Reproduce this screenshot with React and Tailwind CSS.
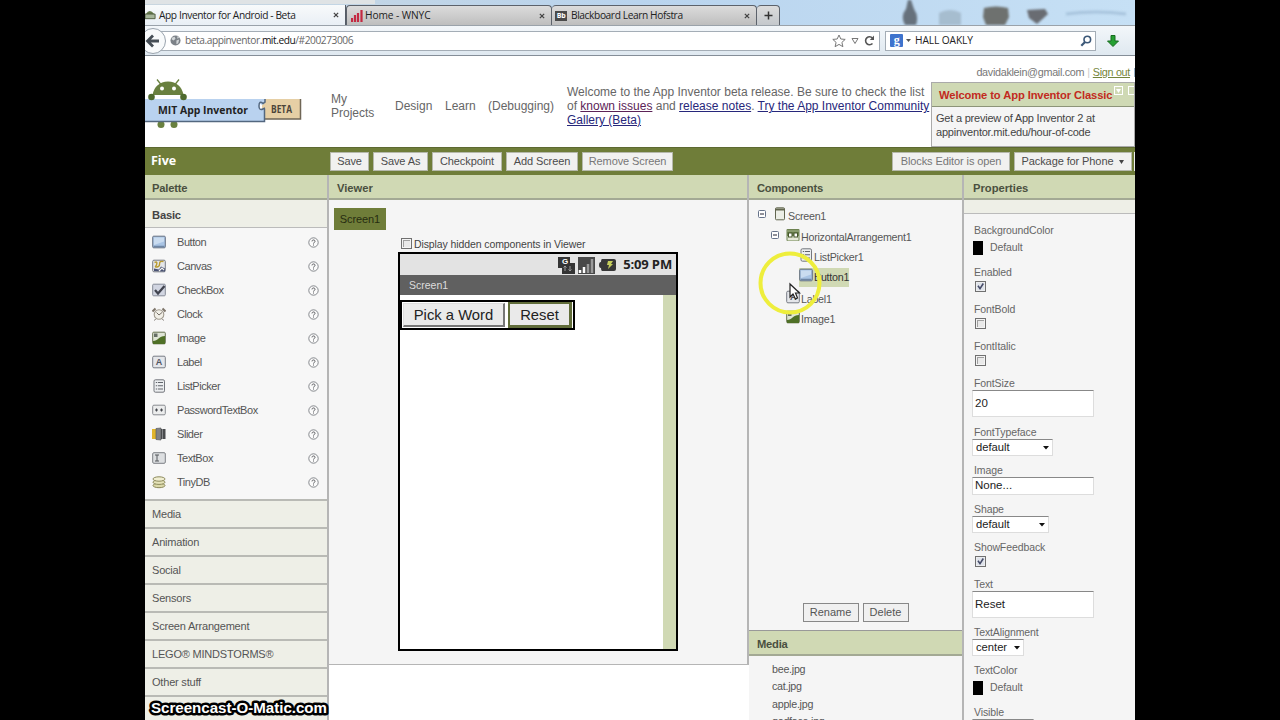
const PALETTE = ["Button", "Canvas", "CheckBox", "Clock", "Image", "Label", "ListPicker", "PasswordTextBox", "Slider", "TextBox", "TinyDB"];
const SECTIONS = ["Media", "Animation", "Social", "Sensors", "Screen Arrangement", "LEGO® MINDSTORMS®", "Other stuff"];
const TREE = [
  { name: "Screen1", icon: "Screen", pad: "pl-[24px]", toggle: "left-[9px]", gap: "gap-px" },
  { name: "HorizontalArrangement1", icon: "Arrangement", pad: "pl-[37px]", toggle: "left-[22px]", gap: "gap-px" },
  { name: "ListPicker1", icon: "ListPicker", pad: "pl-[50px]", gap: "gap-px" },
  { name: "Button1", icon: "Button", pad: "pl-[50px]", gap: "gap-px", selected: true },
  { name: "Label1", icon: "Label", pad: "pl-[37px]", gap: "gap-px" },
  { name: "Image1", icon: "Image", pad: "pl-[37px]", gap: "gap-px" },
];
const PROPS = [
  { label: "BackgroundColor", kind: "color", h: "h-[42px]" },
  { label: "Enabled", kind: "check", checked: true, h: "h-[37px]" },
  { label: "FontBold", kind: "check", h: "h-[37px]" },
  { label: "FontItalic", kind: "check", h: "h-[37px]" },
  { label: "FontSize", kind: "input", value: "20", box: "h-[27px]", h: "h-[49px]" },
  { label: "FontTypeface", kind: "select", value: "default", w: "w-[81px]", h: "h-[38px]" },
  { label: "Image", kind: "input", value: "None...", box: "h-[18px]", h: "h-[39px]" },
  { label: "Shape", kind: "select", value: "default", w: "w-[77px]", h: "h-[38px]" },
  { label: "ShowFeedback", kind: "check", checked: true, h: "h-[37px]" },
  { label: "Text", kind: "input", value: "Reset", box: "h-[27px]", h: "h-[48px]" },
  { label: "TextAlignment", kind: "select", value: "center", w: "w-[52px]", h: "h-[38px]" },
  { label: "TextColor", kind: "color", h: "h-[42px]" },
  { label: "Visible", kind: "select", value: "", w: "w-[62px]", h: "h-[38px]" },
];

function Icon({ name }) {
  const frame = <rect x=".7" y="1.2" width="12.6" height="11.6" rx="1.2" fill="#e4e6ea" stroke="#777b84" />;
  const art = {
    Screen: <><rect x="2.5" y=".8" width="9" height="12" rx="1" fill="#eceee6" stroke="#62664f" /><path d="M2.5 1.5h9v2h-9z" fill="#62664f" /></>,
    Arrangement: <><rect x=".5" y="1" width="13" height="12" rx="1" fill="#6d8250" /><path d="M1.500 8h11v4.500h-11z" fill="#e6ead8" /><rect x="2.5" y="5" width="3.5" height="4" fill="#fff" stroke="#45572b" /><rect x="8" y="5" width="3.5" height="4" fill="#fff" stroke="#45572b" /><path d="M1 3h12" stroke="#a5b58a" /></>,
    Button: <><rect x=".7" y="1.2" width="12.6" height="11.6" rx="1" fill="#a9c4e4" stroke="#656f80" /><path d="M2 2.5h10v4L2 10z" fill="#cadcf0" /><path d="M1.5 11.5h11" stroke="#6e86a5" strokeWidth="1.5" /></>,
    Canvas: <>{frame}<path d="M2 12V9.500l5 1 2-3 4 2v3z" fill="#4a5375" /><path d="M2.500 3.500c4-2 2 3 1 4s4 1 4-2 1-3.500 4-3" fill="none" stroke="#b99b2f" strokeWidth="1.4" /><path d="M7 12l3-3 2 2" fill="none" stroke="#f4f4ee" strokeWidth="1.2" /></>,
    CheckBox: <><rect x=".7" y="1.2" width="12.6" height="11.6" rx="1" fill="#d2d6e2" stroke="#858a97" /><path d="M3 7l3 3.5L12.5 3" fill="none" stroke="#41444f" strokeWidth="2.3" /></>,
    Clock: <><path d="M3.500 1.500L.5 4.500M10.500 1.500L13.500 4.500" stroke="#7e756a" strokeWidth="2" /><circle cx="7" cy="7.5" r="4.800" fill="#f1efe7" stroke="#a09a8e" strokeWidth="1.1" /><path d="M4.5 5.5L7 8l3-2.5" fill="none" stroke="#756e66" /><path d="M3.500 12l-1 1.5M10.500 12l1 1.5" stroke="#77706a" /></>,
    Image: <><rect x=".7" y="1.2" width="12.6" height="11.6" rx="1" fill="#dfe5d6" stroke="#65704f" /><path d="M1 10c5 0 6-5 12-5v8H1z" fill="#4f7027" /><path d="M2 2.5h3.5V6H2z" fill="#666f66" /></>,
    Label: <>{frame}<text x="7" y="10.4" textAnchor="middle" fontSize="9" fontWeight="bold" fontFamily="Liberation Sans" fill="#50545f">A</text></>,
    ListPicker: <><rect x="2" y=".8" width="10.5" height="12.4" rx="1.4" fill="#eceef0" stroke="#73767c" /><path d="M3.8 3.5h1.4M3.8 6.8h1.4M3.8 10h1.4M6 3.5h5M6 6.8h5M6 10h5" stroke="#62656b" strokeWidth="1.1" /></>,
    PasswordTextBox: <><rect x=".7" y="2.2" width="12.6" height="9.6" rx="1.2" fill="#eceded" stroke="#888b90" /><path d="M3 7h3M4.5 5.5v3M8 7h3M9.5 5.5v3" stroke="#44474d" strokeWidth="1.1" /></>,
    Slider: <><path d="M0 2h4v10H0z" fill="#e0b52c" /><path d="M4 1.5l5-.5v12l-5-.5z" fill="#808285" stroke="#5a5b5d" strokeWidth=".7" /><path d="M9 2h4.5v10H9z" fill="#494b4d" /><path d="M10.5 2v10" stroke="#85878a" /></>,
    TextBox: <><rect x=".7" y="1.7" width="12.6" height="10.6" rx="1.2" fill="#dddfe1" stroke="#7d8085" /><path d="M3 4h4M5 4v6M3 10h4" stroke="#55585d" /></>,
    TinyDB: <><ellipse cx="7" cy="10.5" rx="6" ry="2.2" fill="#dbd9a9" stroke="#8c895b" /><ellipse cx="7" cy="7.2" rx="6" ry="2.2" fill="#e5e3b9" stroke="#8c895b" /><ellipse cx="7" cy="4" rx="6" ry="2.2" fill="#f0eed1" stroke="#8c895b" /></>,
  };
  return <svg viewBox="0 0 14 14" className="h-[14px] w-[14px] shrink-0">{art[name]}</svg>;
}

function Help() {
  return <svg viewBox="0 0 11 11" className="h-[11px] w-[11px]"><circle cx="5.5" cy="5.5" r="4.7" fill="#fbfbfb" stroke="#6b6e73" strokeWidth=".8" /><path d="M4 4.4c0-2 3.2-1.8 3 0-.1 1-1.4 1-1.5 2.2" fill="none" stroke="#46484c" strokeWidth=".9" /><path d="M5 7.6h.9v.9H5z" fill="#46484c" /></svg>;
}

function Check({ checked }) {
  return <div className="flex h-[11px] w-[11px] shrink-0 items-center justify-center border border-[#707070] bg-[#f4f4f4]">
    {checked
      ? <svg viewBox="0 0 9 9" className="h-[9px] w-[9px]"><rect x=".5" y=".5" width="8" height="8" fill="#dfe3ea" /><path d="M2 3.8l2 2.8L7.3 1.5" fill="none" stroke="#454b68" strokeWidth="1.6" /></svg>
      : <div className="h-[7px] w-[7px] border-l border-t border-[#a0a0a0] bg-[#e9e9e9]" />}
  </div>;
}

function PanelHead({ children, pad = "pl-[8px]" }) {
  return <div className={`h-[25px] shrink-0 border-b-2 border-[#a3a994] bg-[#d0d9b4] text-[11.2px] font-bold leading-[27px] text-[#4a5040] ${pad}`}>{children}</div>;
}

function Close() {
  return <svg viewBox="0 0 7 7" className="h-[6px] w-[6px]"><path d="M1 1l5 5M6 1L1 6" stroke="#444" strokeWidth="1.5" /></svg>;
}

function Browser() {
  return <>
    <div className="relative flex h-[25px] shrink-0 items-end overflow-hidden bg-linear-to-r from-[#c9d6df] via-[#b9d4ee] to-[#c6e0f5] font-['Open_Sans',sans-serif] text-[10.2px] font-medium tracking-[-0.4px] text-[#222]">
      <div className="absolute left-0 top-0 h-[4px] w-[230px] bg-[#dfe3e5]" />
      <svg viewBox="0 0 355 25" className="absolute left-[635px] top-0 h-[25px] w-[355px] blur-[1px]">
        <path d="M128 0h3l3 9q5 7 2 16h-11q-5-9 1-16z" fill="#66717c" />
        <path d="M159 25V13q11-6 22 0v12z" fill="#a6bdcf" />
        <path d="M204 8q12-3 24 0l1 9-4 8h-19l-3-8z" fill="#6e716f" />
        <path d="M247 10l18-1 3 5-11 10-8-6z" fill="#696c72" />
        <path d="M286 14q30-4 60 0" fill="none" stroke="#a8c4dd" strokeWidth="3" />
      </svg>
      <div className="relative flex h-[20px] w-[201px] items-center border-r border-[#555c66] bg-linear-to-b from-[#f8fafb] to-[#e9eff5]">
        <svg viewBox="0 0 12 12" className="h-[12px] w-[11px]"><path d="M1 5q4-7 9 0z" fill="#64784a" /><path d="M0 5h11v5H0z" fill="#a7b69a" stroke="#4b5a3b" /></svg>
        <span className="ml-[3px] w-[174px] pt-[2px]">App Inventor for Android - Beta</span><Close />
      </div>
      <div className="relative flex h-[20px] w-[206px] items-center rounded-t-sm border-x border-t border-[#5c626b] bg-linear-to-b from-[#dcdcdc] to-[#bebebe]">
        <svg viewBox="0 0 12 12" className="ml-[4px] h-[12px] w-[12px]"><path d="M1 12V8M4 12V5M7 12V3M10.5 12V0" stroke="#c42942" strokeWidth="2.2" /></svg>
        <span className="ml-[2px] w-[174px] pt-px tracking-[-0.1px]">Home - WNYC</span><Close />
      </div>
      <div className="relative flex h-[20px] w-[205px] items-center rounded-t-sm border-r border-t border-[#5c626b] bg-linear-to-b from-[#dcdcdc] to-[#bebebe]">
        <div className="ml-[3px] h-[10px] w-[12px] bg-[#4a4a4a] text-center text-[7px] font-bold leading-[9px] text-white">Bb</div>
        <span className="ml-[4px] w-[173px] pt-px">Blackboard Learn Hofstra</span><Close />
      </div>
      <div className="relative flex h-[20px] w-[23px] items-center justify-center rounded-t-sm border-r border-t border-[#5c626b] bg-linear-to-b from-[#dcdcdc] to-[#c4c8cc]">
        <svg viewBox="0 0 9 9" className="h-[9px] w-[9px]"><path d="M4.5 .5v8M.5 4.5h8" stroke="#333" strokeWidth="1.5" /></svg>
      </div>
    </div>
    <div className="relative flex h-[31px] shrink-0 items-center border-b border-t border-b-[#858e98] border-t-[#9aa2aa] bg-linear-to-b from-[#f3f7fa] to-[#dfe8f0] font-['Open_Sans',sans-serif] text-[10.2px] tracking-[-0.45px] text-[#222]">
      <div className="flex h-[20px] w-[735px] items-center border border-[#a4adb6] bg-white">
        <svg viewBox="0 0 12 12" className="ml-[24px] h-[11px] w-[11px]"><circle cx="6" cy="6" r="5.5" fill="#7c8288" /><path d="M2 3l3-1 1 2-2 2-2-1zM7 6l3-1-1 4-2 1zM8 1l2 2-2 1z" fill="#d2d6d8" /></svg>
        <span className="ml-[4px] w-[614px] pt-px text-[#666]">beta.appinventor.<span className="text-[#111]">mit.edu</span>/#200273006</span>
        <span className="flex items-center gap-[5px] pl-[33px]">
          <svg viewBox="0 0 14 14" className="h-[14px] w-[14px]"><path d="M7 1l1.8 4 4.4.4-3.3 3 1 4.3L7 10.4l-3.9 2.3 1-4.3-3.3-3L5.2 5z" fill="#fff" stroke="#777" /></svg>
          <svg viewBox="0 0 8 8" className="h-[8px] w-[8px]"><path d="M1 1.5h6L4 6.500z" fill="none" stroke="#777" /></svg>
          <svg viewBox="0 0 11 11" className="h-[11px] w-[11px]"><path d="M8.5 8.5A4 4 0 1 1 8.5 3" fill="none" stroke="#555" strokeWidth="1.6" /><path d="M10 .5V5H5.8z" fill="#555" /></svg>
        </span>
      </div>
      <div className="ml-[5px] flex h-[20px] w-[211px] items-center border border-[#a4adb6] bg-white">
        <svg viewBox="0 0 13 13" className="ml-[4px] h-[13px] w-[13px]"><rect width="13" height="13" rx="1" fill="#3e73cd" /><text x="6.5" y="9.5" textAnchor="middle" fontSize="12" fontWeight="bold" fontFamily="Liberation Serif" fill="#fff">g</text></svg>
        <svg viewBox="0 0 5 3" className="ml-[3px] h-[3px] w-[5px]"><path d="M0 0h5L2.5 3z" fill="#555" /></svg>
        <span className="ml-[4px] w-[165px] pt-px tracking-[-0.1px]">HALL OAKLY</span>
        <svg viewBox="0 0 12 12" className="h-[12px] w-[12px]"><circle cx="7.3" cy="4.5" r="3.3" fill="none" stroke="#3c5878" strokeWidth="1.6" /><path d="M5 7L1.3 10.7" stroke="#3c5878" strokeWidth="2.2" /></svg>
      </div>
      <svg viewBox="0 0 12 12" className="ml-[11px] h-[12px] w-[12px]"><path d="M4 .5h4V6h3.5L6 11.5.5 6H4z" fill="#25a032" stroke="#166b1e" /></svg>
      <svg viewBox="0 0 22 28" className="absolute left-0 top-px h-[28px] w-[22px]"><circle cx="8" cy="14" r="12.5" fill="#f8fafb" stroke="#99a3ad" /><path d="M14 14H3M8 8.5L2.5 14 8 19.5" fill="none" stroke="#454d55" strokeWidth="2.8" /></svg>
    </div>
  </>;
}

function Logo() {
  return <svg viewBox="0 0 160 54" className="mt-[20px] h-[54px] w-[160px]">
    <path d="M7.5 19Q10 6 23 5.5 36 6 38.5 19z" fill="#69803f" />
    <path d="M12 3.500l4 5M34 3.500l-4 5" stroke="#69803f" strokeWidth="1.3" />
    <circle cx="17" cy="12.5" r="2" fill="#fff" /><circle cx="29" cy="12.5" r="2" fill="#fff" />
    <circle cx="16" cy="48.5" r="3.5" fill="#69803f" /><circle cx="29" cy="48.5" r="3.5" fill="#69803f" />
    <path d="M117 23h39v20h-39z" fill="#e6cfa5" /><path d="M155.500 23v20h-36" fill="none" stroke="#6f6656" strokeWidth="1.500" />
    <path d="M0 23h120v4l-3 2q-3-3-3 2t3 2l3-1v14H0z" fill="#b9d2ef" />
    <path d="M0 45.500h119.500V33" fill="none" stroke="#53677f" strokeWidth="1.500" />
    <path d="M120 23v3l-2 1.500q-4-3.500-4 2.500 0 5 4 3l2-1" fill="none" stroke="#53677f" strokeWidth="1.500" />
    <path d="M10 19.500h26l-2 2.500H12z" fill="#fff" />
    <circle cx="6.5" cy="21" r="3.3" fill="#4e6a2e" /><circle cx="38.5" cy="21" r="3.3" fill="#4e6a2e" />
    <text x="13" y="37.500" textLength="90" lengthAdjust="spacingAndGlyphs" fontFamily="Open Sans" fontSize="10.8" fontWeight="bold" fill="#222">MIT App Inventor</text>
    <text x="126" y="37" textLength="21" lengthAdjust="spacingAndGlyphs" fontFamily="Open Sans" fontSize="10" fontWeight="bold" fill="#4b443a">BETA</text>
  </svg>;
}

function Header() {
  return <div className="relative flex h-[91px] shrink-0 bg-white text-[12px] leading-[14px] text-[#666]">
    <div className="w-[186px]"><Logo /></div>
    <div className="mt-[36px] w-[64px]">My<br />Projects</div>
    <div className="mt-[43px] w-[50px]">Design</div>
    <div className="mt-[43px] w-[43px]">Learn</div>
    <div className="mt-[43px] w-[79px]">(Debugging)</div>
    <div className="mt-[29px] w-[366px] whitespace-nowrap">
      Welcome to the App Inventor beta release. Be sure to check the list<br />
      of <u className="text-[#5b2357]">known issues</u> and <u className="text-[#27277b]">release notes</u>. <u className="text-[#27277b]">Try the App Inventor Community</u><br />
      <u className="text-[#27277b]">Gallery (Beta)</u>
    </div>
    <div className="absolute right-0 top-[9px] flex whitespace-nowrap pr-[5px] text-[10.8px] tracking-[-0.3px] text-[#777]">davidaklein@gmail.com<span className="px-[3px] text-[#ccc]">|</span><u className="text-[#74853a]">Sign out</u></div>
    <div className="absolute right-0 top-[12px] h-[9px] w-px bg-[#9ab0c4]" />
    <div className="absolute left-[786px] top-[26px] h-[65px] w-[204px] border border-[#aaa] bg-[#f5f5f5] text-[11px] leading-[13.500px] tracking-[-0.22px] text-[#444]">
      <div className="relative h-[24px] border-b border-[#8c9478] bg-[#cfd9b4] pl-[7px] text-[11.200px] font-bold leading-[25px] tracking-[-0.1px] text-[#c22a20]">
        Welcome to App Inventor Classic
        <div className="absolute right-[11px] top-[3px] flex h-[9px] w-[9px] items-center justify-center border border-white"><svg viewBox="0 0 5 4" className="h-[4px] w-[5px]"><path d="M0 0h5L2.5 4z" fill="#fff" /></svg></div>
        <div className="absolute right-0 top-[3px] h-[9px] w-[6px] border-y border-l border-white" />
      </div>
      <div className="whitespace-nowrap pl-[4px] pt-[5px]">Get a preview of App Inventor 2 at<br />appinventor.mit.edu/hour-of-code</div>
    </div>
  </div>;
}

function ToolButton({ className, children }) {
  return <div className={`flex h-[19px] items-center justify-center whitespace-nowrap border border-[#b5b8ab] bg-[#f1f1f0] text-[11px] tracking-[-0.1px] ${className}`}>{children}</div>;
}

function Toolbar() {
  return <div className="flex h-[28px] shrink-0 items-center border-t border-[#5d6932] bg-[#6f7d39] text-[#4c4c4c]">
    <div className="w-[185px] pl-[6px] font-['Open_Sans',sans-serif] text-[12.5px] font-bold text-white">Five</div>
    <div className="flex gap-[4px]">
      <ToolButton className="w-[39px]">Save</ToolButton>
      <ToolButton className="w-[55px]">Save As</ToolButton>
      <ToolButton className="w-[70px]">Checkpoint</ToolButton>
      <ToolButton className="w-[72px]">Add Screen</ToolButton>
      <ToolButton className="w-[91px] text-[#777]">Remove Screen</ToolButton>
    </div>
    <div className="ml-auto flex gap-[4px]">
      <ToolButton className="w-[118px] text-[#777]">Blocks Editor is open</ToolButton>
      <ToolButton className="w-[118px] gap-[6px]">Package for Phone <svg viewBox="0 0 5 4" className="h-[4px] w-[5px]"><path d="M0 0h5L2.5 4z" fill="#444" /></svg></ToolButton>
    </div>
    <div className="ml-[2px] h-[19px] w-px bg-[#eee]" />
  </div>;
}

function Palette() {
  return <div className="flex w-[184px] shrink-0 flex-col border-r-2 border-[#b5b5b5] bg-[#f7f7f7] text-[11px] tracking-[-0.2px] text-[#555]">
    <PanelHead pad="pl-[7px]">Palette</PanelHead>
    <div className="h-[28px] shrink-0 border-b border-[#bbb] bg-[#eeefe7] pl-[7px] text-[11.200px] font-bold leading-[30px] text-[#444]">Basic</div>
    <div className="h-[271px] shrink-0 pt-[2px]">
      {PALETTE.map(name => <div key={name} className="flex h-[24px] items-center pl-[7px] pr-[8px]">
        <Icon name={name} /><span className="ml-[11px] flex-1 tracking-[-0.45px]">{name}</span><Help />
      </div>)}
    </div>
    {SECTIONS.map(name => <div key={name} className="h-[28px] shrink-0 border-t-2 border-[#b9bab5] bg-[#eeefe7] pl-[7px] leading-[27px]">{name}</div>)}
    <div className="h-[28px] shrink-0 border-t-2 border-[#b9bab5] bg-[#eeefe7]" />
  </div>;
}

function Phone() {
  return <div className="flex h-[399px] w-[280px] flex-col border-2 border-black bg-white">
    <div className="flex h-[21px] shrink-0 items-center justify-end bg-[#e3e3e3] pr-[4px]">
      <svg viewBox="0 0 60 18" className="mr-[6px] h-[18px] w-[60px]">
        <path d="M1 1h12v6h5v11H5v-6H1z" fill="#343434" /><text x="5" y="8" fontSize="8" fontWeight="bold" fontFamily="Liberation Sans" fill="#fff">G</text><path d="M8 15v-5M6.5 11.5L8 10l1.500 1.500M13 10v5M11.500 13.500L13 15l1.500-1.500" fill="none" stroke="#9a9a9a" />
        <path d="M21 1h17v17H21z" fill="#484848" /><path d="M23 17v-3M27 17v-6" stroke="#fff" strokeWidth="2.500" /><path d="M31 17V8M35 17V3" stroke="#999" strokeWidth="2.500" />
        <path d="M45 3h12q2 0 2 2v8q0 2-2 2H45q-1 0-1-3-2 0-2-3t2-3q0-3 1-3z" fill="#383838" /><path d="M51 5h5l-2 3h2l-5 5 1-4h-2z" fill="#c7cf5c" />
      </svg>
      <span className="font-['Open_Sans',sans-serif] text-[13px] font-bold tracking-[-0.15px] text-[#222]">5:09 PM</span>
    </div>
    <div className="h-[20px] shrink-0 bg-[#606060] pl-[9px] text-[10.500px] leading-[20px] text-[#ddd]">Screen1</div>
    <div className="flex flex-1">
      <div className="flex-1 pt-[5px]">
        <div className="flex h-[30px] w-[175px] items-center justify-between border-2 border-black px-px text-[14.800px] text-[#222]">
          <div className="flex h-[24px] w-[102px] items-center justify-center border-b-2 border-r-2 border-l border-t border-[#777] border-l-[#ddd] border-t-[#ddd] bg-[#eaeaea] pt-px">Pick a Word</div>
          <div className="flex h-[26px] w-[64px] items-center justify-center border-[3px] border-l-2 border-t-2 border-[#616d3a] bg-[#eaeaea] pt-px">Reset</div>
        </div>
      </div>
      <div className="w-[13px] bg-[#d0d9b4]" />
    </div>
  </div>;
}

function Viewer() {
  return <div className="flex h-[490px] w-[420px] shrink-0 flex-col border-b border-r-2 border-[#b5b5b5] bg-[#f5f5f5]">
    <PanelHead>Viewer</PanelHead>
    <div className="ml-[5px] mt-[8px] h-[22px] w-[52px] bg-[#6f7d39] text-center text-[11px] leading-[23px] tracking-[-0.1px] text-[#262c10]">Screen1</div>
    <div className="ml-[72px] mt-[7px] flex h-[15px] items-center gap-[2px] text-[10.500px] tracking-[-0.1px] text-[#444]"><div className="-translate-y-px"><Check /></div>Display hidden components in Viewer</div>
    <div className="pl-[69px]"><Phone /></div>
  </div>;
}

function Components() {
  return <div className="flex w-[215px] shrink-0 flex-col border-r-2 border-[#b5b5b5] bg-[#f5f5f5] text-[10.700px] tracking-[-0.25px] text-[#555]">
    <PanelHead>Components</PanelHead>
    <div className="h-[402px] shrink-0 pt-[6px]">
      {TREE.map(n => <div key={n.name} className={`relative flex h-[20.600px] items-center ${n.pad}`}>
        {n.toggle && <svg viewBox="0 0 8 8" className={`absolute top-[4px] h-[8px] w-[8px] ${n.toggle}`}><rect x=".5" y=".5" width="7" height="7" rx="1" fill="#fff" stroke="#66738a" /><path d="M2 4h4" stroke="#223" /></svg>}
        <div className={`flex h-[19px] items-center ${n.gap} ${n.selected ? "-translate-y-px bg-[#d0d9b4] text-[#333]" : ""}`}>
          <div className="-translate-y-[2px]"><Icon name={n.icon} /></div><span>{n.name}</span>
        </div>
      </div>)}
    </div>
    <div className="flex h-[28px] shrink-0 justify-center gap-[4px] pt-px text-[11px] tracking-normal">
      <div className="flex h-[19px] w-[56px] items-center justify-center border border-[#888] bg-[#f0f0f0]">Rename</div>
      <div className="flex h-[19px] w-[46px] items-center justify-center border border-[#888] bg-[#f0f0f0]">Delete</div>
    </div>
    <div className="shrink-0 border-t border-[#999]"><PanelHead>Media</PanelHead></div>
    <div className="pl-[23px] pt-[5px] leading-[17.300px]">
      {["bee.jpg", "cat.jpg", "apple.jpg", "godface.jpg"].map(f => <div key={f}>{f}</div>)}
    </div>
  </div>;
}

function Control({ p }) {
  if (p.kind === "color") return <div className="flex items-center pl-px pt-[3px]"><div className="h-[14px] w-[10px] bg-black" /><span className="ml-[7px]">Default</span></div>;
  if (p.kind === "check") return <div className="pl-[3px] pt-[2px]"><Check checked={p.checked} /></div>;
  if (p.kind === "input") return <div className={`flex w-[122px] items-center border border-[#ddd] border-t-[#888] bg-white pl-[2px] text-[11.500px] tracking-normal text-[#222] ${p.box}`}>{p.value}</div>;
  return <div className={`flex h-[17px] items-center justify-between border border-[#ddd] border-t-[#888] bg-white pl-[3px] pr-[3px] text-[11.200px] tracking-normal text-[#222] ${p.w}`}>
    <span>{p.value}</span><svg viewBox="0 0 6 4" className="h-[4px] w-[6px]"><path d="M0 0h6L3 3.5z" fill="#111" /></svg>
  </div>;
}

function Properties() {
  return <div className="flex flex-1 flex-col bg-[#f5f5f5] text-[10.500px] tracking-[-0.1px] text-[#666]">
    <PanelHead pad="pl-[9px] tracking-normal">Properties</PanelHead>
    <div className="h-[14px] shrink-0 border-b border-[#bbb] bg-[#eeefe7]" />
    <div className="pl-[8px] pt-[9px]">
      {PROPS.map(p => <div key={p.label} className={p.h}><div className="h-[14px] pl-[2px] leading-[14px]">{p.label}</div><Control p={p} /></div>)}
    </div>
  </div>;
}

export default function App() {
  return <div className="relative h-[720px] w-[1280px] overflow-hidden bg-black pl-[145px] font-['Liberation_Sans',Arial,sans-serif]">
    <div className="flex h-[720px] w-[990px] flex-col overflow-hidden bg-white">
      <Browser />
      <Header />
      <Toolbar />
      <div className="flex h-[545px] overflow-hidden">
        <Palette />
        <Viewer />
        <Components />
        <Properties />
      </div>
    </div>
    {/* pointer highlight */}
    <svg viewBox="0 0 66 66" className="absolute left-[757px] top-[250px] h-[66px] w-[66px]">
      <circle cx="33" cy="33" r="29.5" fill="none" stroke="#eeee3c" strokeWidth="4" />
      <path d="M33 34v13l3-3 2.5 5 2-1-2-5h4z" fill="#fff" stroke="#222" strokeWidth="1.2" />
    </svg>
    {/* recorder watermark */}
    <svg viewBox="0 0 186 22" className="absolute left-[146px] top-[698px] h-[22px] w-[186px]">
      <text x="5" y="14.500" textLength="176" lengthAdjust="spacingAndGlyphs" fontFamily="Liberation Sans" fontSize="14.500" fontWeight="bold" fill="#fff" stroke="#000" strokeWidth="5" strokeLinejoin="round" paintOrder="stroke">Screencast-O-Matic.com</text>
    </svg>
  </div>;
}
